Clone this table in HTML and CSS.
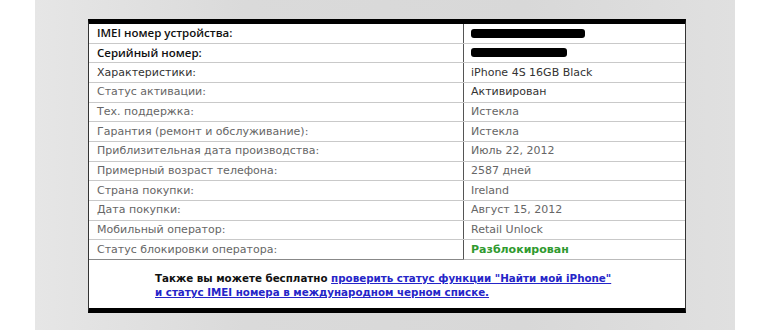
FILE: index.html
```html
<!DOCTYPE html>
<html lang="ru">
<head>
<meta charset="utf-8">
<title>IMEI</title>
<link rel="stylesheet" href="styles.css">
</head>
<body>
<div class="panel">
  <div class="card">
    <table class="info">
      <tr><td class="lbl strong">IMEI номер устройства:</td><td class="val"><span class="redact r1"></span></td></tr>
      <tr><td class="lbl strong">Серийный номер:</td><td class="val"><span class="redact r2"></span></td></tr>
      <tr><td class="lbl dark">Характеристики:</td><td class="val dark">iPhone 4S 16GB Black</td></tr>
      <tr><td class="lbl">Статус активации:</td><td class="val dark">Активирован</td></tr>
      <tr><td class="lbl">Тех. поддержка:</td><td class="val">Истекла</td></tr>
      <tr><td class="lbl">Гарантия (ремонт и обслуживание):</td><td class="val">Истекла</td></tr>
      <tr><td class="lbl">Приблизительная дата производства:</td><td class="val">Июль 22, 2012</td></tr>
      <tr><td class="lbl">Примерный возраст телефона:</td><td class="val">2587 дней</td></tr>
      <tr><td class="lbl">Страна покупки:</td><td class="val">Ireland</td></tr>
      <tr><td class="lbl">Дата покупки:</td><td class="val">Август 15, 2012</td></tr>
      <tr><td class="lbl">Мобильный оператор:</td><td class="val">Retail Unlock</td></tr>
      <tr><td class="lbl">Статус блокировки оператора:</td><td class="val green">Разблокирован</td></tr>
    </table>
    <div class="note">
      Также вы можете бесплатно <a href="#">проверить статус функции "Найти мой iPhone"</a><br>
      <a href="#">и статус IMEI номера в международном черном списке.</a>
    </div>
  </div>
</div>
</body>
</html>
```

FILE: styles.css
```css
html, body {
  margin: 0;
  padding: 0;
  background: #ffffff;
}
body {
  width: 770px;
  height: 330px;
  overflow: hidden;
  font-family: "DejaVu Sans", Verdana, sans-serif;
}
.panel {
  margin-left: 35px;
  width: 700px;
  height: 330px;
  padding-top: 19px;
  box-sizing: border-box;
  background: linear-gradient(to right, #e6e6e6 0%, #dadada 30%, #d8d8d8 70%, #e0e0e0 100%);
}
.card {
  margin-left: 53px;
  width: 598px;
  box-sizing: border-box;
  background: #ffffff;
  border-top: 5px solid #000;
  border-bottom: 5px solid #000;
  border-left: 1px solid #333;
  border-right: 1px solid #333;
}
.info {
  width: 100%;
  border-collapse: collapse;
  table-layout: fixed;
}
.info td {
  height: 18.67px;
  padding: 0 0 0 8px;
  border-bottom: 1px solid #c9c9c9;
  font-size: 11px;
  line-height: 14px;
  color: #666;
  white-space: nowrap;
  vertical-align: middle;
}
.info td.lbl {
  width: 366px;
  border-right: 1px solid #555;
}
.info td.val {
  padding-left: 7px;
}
.info tr:last-child td.lbl {
  border-bottom-color: #888;
}
.info tr:last-child td.val {
  border-bottom-color: #bbb;
}
.info td.strong {
  color: #111;
  font-family: "Open Sans", "DejaVu Sans", sans-serif;
  font-weight: 600;
  font-size: 11.5px;
}
.info td.dark {
  color: #333;
}
.info td.green {
  color: #2f9a2f;
  font-weight: bold;
}
.redact {
  display: inline-block;
  vertical-align: middle;
  height: 9px;
  background: #000;
  border-radius: 3px;
}
.r1 { width: 114px; }
.r2 { width: 96px; }
.note {
  padding: 11px 0 8px 66px;
  font-size: 10.3px;
  line-height: 14.5px;
  font-weight: bold;
  color: #111;
}
.note a {
  color: #2525c8;
  text-decoration: underline;
}
```
